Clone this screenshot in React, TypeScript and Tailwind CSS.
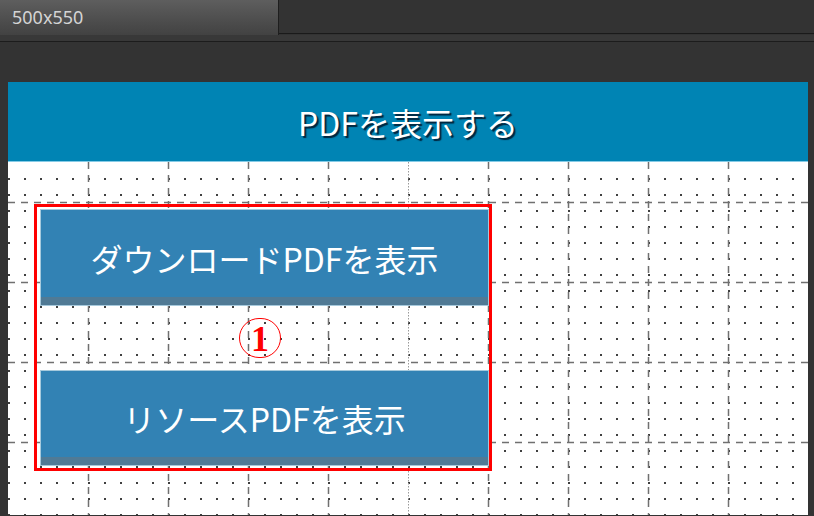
import React from 'react';

const vLines = [80, 160, 240, 320, 480, 560, 640, 720];
const hLines = [40, 120, 200, 280];

function GridBackdrop() {
  return (
    <svg className="absolute inset-0" width={800} height={353} aria-hidden="true">
      <defs>
        <pattern id="dots" x={0} y={16} width={16} height={16} patternUnits="userSpaceOnUse">
          <rect x={0} y={0} width={2} height={2} fill="#3f3f3f" />
        </pattern>
      </defs>
      <rect x={0} y={16} width={800} height={337} fill="url(#dots)" />
      {vLines.map(x => (
        <line key={`v${x}`} x1={x + 0.5} y1={0} x2={x + 0.5} y2={353} stroke="#707070" strokeWidth={1.5} strokeDasharray="7 6" />
      ))}
      {hLines.map(y => (
        <line key={`h${y}`} x1={0} y1={y + 0.5} x2={800} y2={y + 0.5} stroke="#707070" strokeWidth={1.5} strokeDasharray="7 6" />
      ))}
      <line x1={400.5} y1={0} x2={400.5} y2={353} stroke="#9a9a9a" strokeWidth={1} strokeDasharray="1.5 1.5" />
    </svg>
  );
}

function PdfButton({ label, tall }: { label: string; tall?: boolean }) {
  return (
    <div
      className={`relative flex w-[449px] ${tall ? 'h-[97px]' : 'h-[96px]'} flex-col border border-[#a6c9dc] bg-[#3282b4]`}
    >
      <div className="flex flex-1 items-center justify-center pt-[8px] text-[32px] text-white">
        {label}
      </div>
      <div className="h-[8px] bg-[#507a95]" />
    </div>
  );
}

export default function App() {
  return (
    <div
      className="w-[814px] h-[516px] overflow-hidden bg-[#333333]"
      style={{ fontFamily: '"Noto Sans CJK JP", "Noto Sans", sans-serif' }}
    >
      {/* editor tab strip */}
      <div className="flex h-[35px]">
        <div className="flex w-[279px] items-center border-r border-[#1e1e1e] bg-gradient-to-b from-[#5e5e5e] to-[#424242] pl-[12px] text-[18px] text-[#d4d4d4]" style={{ fontFamily: '"Noto Sans", sans-serif' }}>
          500x550
        </div>
        <div className="h-[34px] flex-1 border-b border-[#1a1a1a] bg-[#333333]" />
      </div>
      <div className="h-[7px] border-b border-[#1c1c1c] bg-[#383838]" />

      {/* canvas */}
      <div className="ml-[8px] mt-[40px] w-[800px]">
        <div className="flex h-[80px] items-center justify-center border-b border-[#86cbe6] bg-[#0084b4] text-[32px] text-white [text-shadow:2px_2px_1px_rgba(0,20,40,0.85)]">
          PDFを表示する
        </div>
        <div className="relative h-[353px] bg-white">
          <GridBackdrop />
          <div className="relative pl-[26px] pt-[42px]">
            <div className="relative flex w-[458px] h-[267px] flex-col border-[3px] border-[#ff0000] pl-[3px] pt-[2px]">
              <PdfButton label="ダウンロードPDFを表示" tall />
              <div className="flex h-[64px] items-center pl-[199px]">
                <div
                  className="flex h-[40px] w-[42px] items-center justify-center rounded-full border-[1.5px] border-[#ff0000] pt-[2px] text-[36px] font-bold leading-none text-[#ff0000]"
                  style={{ fontFamily: '"Liberation Serif", serif' }}
                >
                  1
                </div>
              </div>
              <PdfButton label="リソースPDFを表示" />
            </div>
          </div>
        </div>
      </div>
    </div>
  );
}
